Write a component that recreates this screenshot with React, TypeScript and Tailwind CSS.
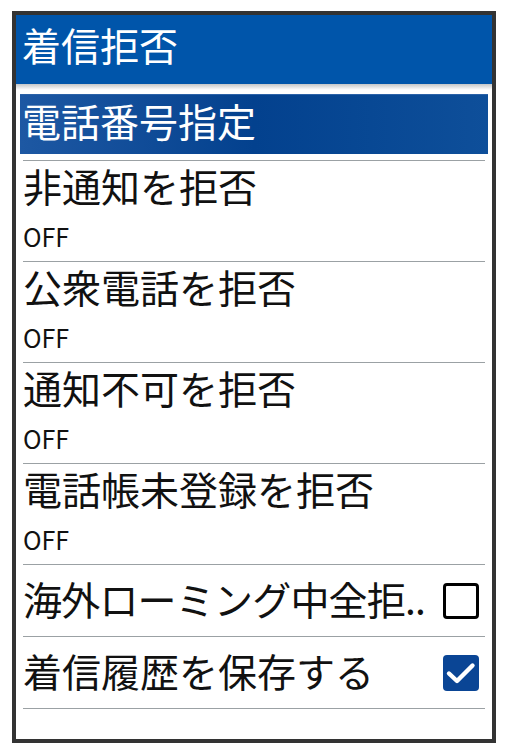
import React from "react";

const font = { fontFamily: '"Noto Sans CJK JP", "Noto Sans", sans-serif' };

function Sep() {
  return <div className="mx-[7px] h-px bg-[#9ba1a4]" />;
}

function OffRow({ title }: { title: string }) {
  return (
    <div className="h-[100px] flex flex-col pl-[7px]">
      <div className="h-[48px] leading-[48px] text-[39px] text-[#111] whitespace-nowrap">{title}</div>
      <div className="h-[52px] leading-[54px] text-[25px] text-[#111]">OFF</div>
    </div>
  );
}

function CheckRow({ title, checked, tight }: { title: string; checked: boolean; tight?: boolean }) {
  return (
    <div className="h-[71px] flex items-center justify-between pl-[7px] pr-[13px]">
      <div
        className={
          tight
            ? "text-[39px] leading-[60px] mb-[6px] text-[#111] whitespace-nowrap tracking-[-0.8px]"
            : "text-[39px] leading-[60px] mb-[6px] text-[#111] whitespace-nowrap"
        }
      >
        {title}
      </div>
      {checked ? (
        <div className="w-[36px] h-[36px] rounded-[4px] bg-[#0a4595] flex items-center justify-center">
          <svg width="36" height="36" viewBox="0 0 36 36">
            <path d="M6 18.5 L14 26 L29.5 10.5" fill="none" stroke="white" strokeWidth="4.4" strokeLinecap="round" strokeLinejoin="round" />
          </svg>
        </div>
      ) : (
        <div className="w-[36px] h-[36px] rounded-[4px] border-[3px] border-black bg-white" />
      )}
    </div>
  );
}

export default function App() {
  return (
    <div className="w-[507px] h-[753px] bg-white pt-[11px] pl-[12px]" style={font}>
      <div className="w-[484px] h-[732px] border-[4px] border-[#333333] bg-white flex flex-col">
        <div className="h-[69px] bg-[#0055aa] text-white text-[39px] leading-[59px] pl-[6px]">着信拒否</div>
        <div className="h-[6px] bg-gradient-to-b from-[#c4c6c8] to-white" />
        <div className="h-[4px]" />
        <div className="mx-[4px] h-[60px] bg-gradient-to-r from-[#1d58a3] via-[#03418e] to-[#0e4f9a] border-t border-[#2b62a8] text-white text-[39px] leading-[50px] pl-[2px]">
          電話番号指定
        </div>
        <div className="h-[6px]" />
        <Sep />
        <OffRow title="非通知を拒否" />
        <Sep />
        <OffRow title="公衆電話を拒否" />
        <Sep />
        <OffRow title="通知不可を拒否" />
        <Sep />
        <OffRow title="電話帳未登録を拒否" />
        <Sep />
        <CheckRow title="海外ローミング中全拒.." checked={false} tight />
        <Sep />
        <CheckRow title="着信履歴を保存する" checked={true} />
        <Sep />
      </div>
    </div>
  );
}
